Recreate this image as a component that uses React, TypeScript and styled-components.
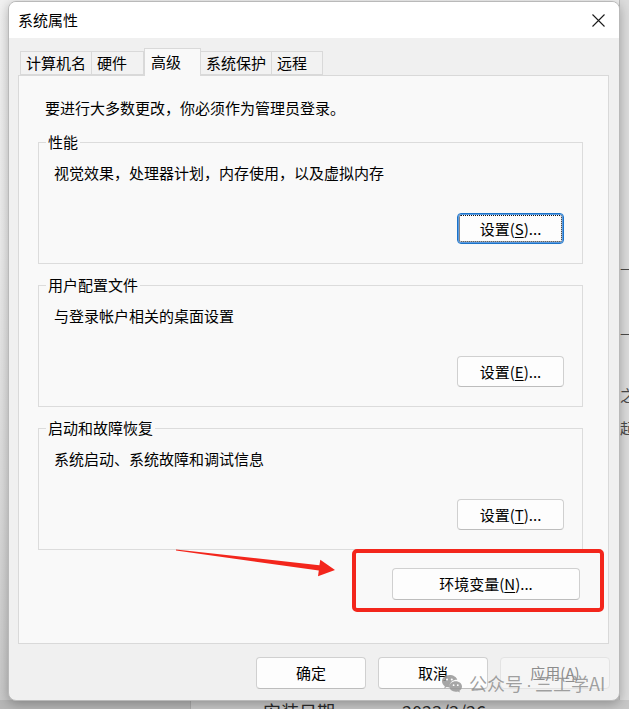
import React from "react";
import styled, { createGlobalStyle, css } from "styled-components";

const GlobalStyle = createGlobalStyle`
  html, body {
    margin: 0;
    padding: 0;
  }
  body {
    width: 629px;
    height: 709px;
    overflow: hidden;
    font-family: "Noto Sans CJK SC", "Microsoft YaHei", sans-serif;
    color: #000;
  }
`;

const Desktop = styled.div`
  position: relative;
  width: 629px;
  height: 709px;
  overflow: hidden;
`;

// the settings window lying behind the dialog
const BackWindow = styled.div`
  display: flex;
  flex-direction: column;
  width: 100%;
  height: 100%;
  background: linear-gradient(180deg, #f1f1f1 0%, #ececec 35%, #dcdcdc 70%, #c8c8c8 100%);
`;

const BackMain = styled.div`
  flex: 1;
  display: flex;
`;

const BackFill = styled.div`
  flex: 1;
`;

const BackSide = styled.div`
  width: 9px;
  display: flex;
  flex-direction: column;
  padding-top: 258px;
  font-size: 15px;
  line-height: 20px;
  color: #4a4a4a;
  overflow: hidden;
  white-space: nowrap;
  border-left: 1px solid #bdbdbd;
  background: #dcdcdc;
`;

const Fragment = styled.span<{ $gap: number }>`
  margin-top: ${p => p.$gap}px;
`;

const BackRow = styled.div`
  height: 9px;
  display: flex;
  font-size: 18px;
  line-height: 22px;
  color: #2a2a2a;
  white-space: nowrap;
`;

const BackCell = styled.div<{ $w?: number; $shade?: boolean }>`
  width: ${p => (p.$w ? `${p.$w}px` : "auto")};
  flex: ${p => (p.$w ? "none" : 1)};
  padding-left: ${p => (p.$shade ? 0 : 72)}px;
  background: ${p => (p.$shade ? "#b7b7b7" : "#c7c7c7")};
  border-right: ${p => (p.$shade ? "1px solid #a9a9a9" : "none")};
  display: flex;
  gap: 67px;
`;

const Dialog = styled.div`
  position: absolute;
  left: 8px;
  top: 1px;
  width: 612px;
  height: 700px;
  box-sizing: border-box;
  display: flex;
  flex-direction: column;
  background: #f0f0f0;
  border: 1px solid #b9b9b9;
  border-radius: 8px;
  box-shadow: 0 3px 12px rgba(0, 0, 0, 0.28);
  overflow: hidden;
`;

const TitleBar = styled.div`
  height: 36px;
  display: flex;
  align-items: center;
  justify-content: space-between;
  padding-left: 9px;
  background: #ffffff;
`;

const Title = styled.span`
  font-size: 15px;
  line-height: 20px;
`;

const CloseButton = styled.div`
  width: 42px;
  height: 36px;
  display: flex;
  align-items: center;
  justify-content: center;
`;

const Body = styled.div`
  flex: 1;
  display: flex;
  flex-direction: column;
  padding: 10px 10px 0 9px;
`;

const TabStrip = styled.div`
  height: 28px;
  display: flex;
  align-items: flex-end;
  padding-left: 2px;
`;

const Tab = styled.div<{ $w: number; $active?: boolean }>`
  position: relative;
  box-sizing: border-box;
  width: ${p => p.$w}px;
  display: flex;
  align-items: center;
  font-size: 15px;
  line-height: 20px;
  border: 1px solid #d9d9d9;
  border-left-width: 0;
  ${p =>
    p.$active
      ? css`
          height: 28px;
          padding-left: 6px;
          padding-bottom: 2px;
          background: #f9f9f9;
          border-left-width: 1px;
          border-bottom: none;
          z-index: 1;
        `
      : css`
          height: 24px;
          margin-bottom: 1px;
          padding-left: 5px;
          background: #f2f2f2;
          &:first-child {
            border-left-width: 1px;
          }
        `}
`;

const Panel = styled.div`
  box-sizing: border-box;
  height: 569px;
  margin-top: -1px;
  padding: 22px 25px 0 19px;
  display: flex;
  flex-direction: column;
  background: #f9f9f9;
  border: 1px solid #d9d9d9;
`;

const Notice = styled.div`
  margin-left: 7px;
  font-size: 15px;
  line-height: 20px;
`;

const Group = styled.fieldset`
  margin: 11px 0 0;
  padding: 0 18px 19px 15px;
  min-width: 0;
  display: flex;
  flex-direction: column;
  border: 1px solid #dcdcdc;

  &:first-of-type {
    margin-top: 14px;
  }
`;

const Legend = styled.legend`
  margin-left: -8px;
  padding: 0 2px;
  font-size: 15px;
  line-height: 20px;
`;

const GroupText = styled.div`
  margin-top: 11px;
  font-size: 15px;
  line-height: 20px;
`;

const Button = styled.div<{ $w: number; $h?: number; $focused?: boolean; $disabled?: boolean }>`
  box-sizing: border-box;
  width: ${p => p.$w}px;
  height: ${p => p.$h ?? 31}px;
  display: flex;
  align-items: center;
  justify-content: center;
  font-size: 15px;
  line-height: 20px;
  background: #fdfdfd;
  border: 1px solid #d0d0d0;
  border-bottom-color: #bdbdbd;
  border-radius: 4px;

  u {
    text-underline-offset: 2px;
  }

  ${p =>
    p.$focused &&
    css`
      border: 1px solid #1a73c9;
      box-shadow: inset 0 0 0 1px #5d9be0;
      outline: 1px dotted #111;
      outline-offset: -3px;
    `}

  ${p =>
    p.$disabled &&
    css`
      background: #f5f5f5;
      border-color: #e3e3e3;
      color: #8c8c8c;
    `}
`;

const SettingsButton = styled(Button)`
  align-self: flex-end;
  margin-top: 30px;
`;

const EnvRow = styled.div`
  margin-top: 18px;
  padding-right: 3px;
  display: flex;
  justify-content: flex-end;
`;

const FooterRow = styled.div`
  margin-top: 13px;
  margin-right: -1px;
  display: flex;
  justify-content: flex-end;
  gap: 12px;
`;

// annotations drawn over the screenshot
const Markup = styled.svg`
  position: absolute;
  left: 0;
  top: 0;
  pointer-events: none;
`;

const Watermark = styled.div`
  position: absolute;
  left: 441px;
  top: 672px;
  display: flex;
  align-items: center;
  gap: 6px;
  font-size: 18px;
  line-height: 22px;
  color: rgba(140, 140, 140, 0.82);
  white-space: nowrap;
  pointer-events: none;
`;

const Dot = styled.span`
  font-family: "Liberation Sans", Arial, sans-serif;
  padding: 0 3px;
`;

const CloseIcon = () => (
  <svg width="13" height="13" viewBox="0 0 13 13">
    <path d="M0.5 0.5L12.5 12.5M12.5 0.5L0.5 12.5" stroke="#1b1b1b" strokeWidth="1.1" />
  </svg>
);

const WeChatIcon = () => (
  <svg width="22" height="20" viewBox="0 0 22 20">
    <path
      d="M8.5 1C4.4 1 1 3.8 1 7.3c0 2 1.1 3.7 2.8 4.9L3.2 14.4l2.5-1.3c.9.3 1.8.4 2.8.4h.4a5.8 5.8 0 0 1-.2-1.6c0-3.4 3.2-6.1 7.2-6.1h.4C15.6 3.1 12.4 1 8.5 1z"
      fill="rgba(150,150,150,0.85)"
    />
    <path
      d="M21 12.5c0-2.9-2.8-5.2-6.3-5.2s-6.3 2.3-6.3 5.2 2.8 5.2 6.3 5.2c.8 0 1.5-.1 2.2-.3l2 1.1-.5-1.7c1.6-1 2.6-2.5 2.6-4.3z"
      fill="rgba(150,150,150,0.85)"
    />
    <circle cx="6" cy="5.6" r="1" fill="#fff" />
    <circle cx="10.8" cy="5.6" r="1" fill="#fff" />
    <circle cx="12.6" cy="11.2" r="0.9" fill="#fff" />
    <circle cx="16.8" cy="11.2" r="0.9" fill="#fff" />
  </svg>
);

const settingsGroups = [
  { title: "性能", text: "视觉效果，处理器计划，内存使用，以及虚拟内存", key: "S", focused: true },
  { title: "用户配置文件", text: "与登录帐户相关的桌面设置", key: "E" },
  { title: "启动和故障恢复", text: "系统启动、系统故障和调试信息", key: "T" },
];

const tabs = [
  { label: "计算机名", w: 72 },
  { label: "硬件", w: 52 },
  { label: "高级", w: 57, active: true },
  { label: "系统保护", w: 71 },
  { label: "远程", w: 51 },
];

const fragments = [
  { text: "—", gap: 0 },
  { text: "—(", gap: 45 },
  { text: "之", gap: 42 },
  { text: "起", gap: 13 },
];

export default function App() {
  return (
    <Desktop>
      <GlobalStyle />
      <BackWindow>
        <BackMain>
          <BackFill />
          <BackSide>
            {fragments.map(f => (
              <Fragment key={f.text} $gap={f.gap}>
                {f.text}
              </Fragment>
            ))}
          </BackSide>
        </BackMain>
        <BackRow>
          <BackCell $w={190} $shade />
          <BackCell>
            <span>安装日期</span>
            <span>2023/3/26</span>
          </BackCell>
        </BackRow>
      </BackWindow>

      <Dialog>
        <TitleBar>
          <Title>系统属性</Title>
          <CloseButton>
            <CloseIcon />
          </CloseButton>
        </TitleBar>
        <Body>
          <TabStrip>
            {tabs.map(t => (
              <Tab key={t.label} $w={t.w} $active={t.active}>
                {t.label}
              </Tab>
            ))}
          </TabStrip>
          <Panel>
            <Notice>要进行大多数更改，你必须作为管理员登录。</Notice>
            {settingsGroups.map(g => (
              <Group key={g.title}>
                <Legend>{g.title}</Legend>
                <GroupText>{g.text}</GroupText>
                <SettingsButton $w={107} $focused={g.focused}>
                  设置(<u>{g.key}</u>)...
                </SettingsButton>
              </Group>
            ))}
            <EnvRow>
              <Button $w={188} $h={32}>
                环境变量(<u>N</u>)...
              </Button>
            </EnvRow>
          </Panel>
          <FooterRow>
            <Button $w={110} $h={32}>确定</Button>
            <Button $w={110} $h={32}>取消</Button>
            <Button $w={110} $h={32} $disabled>
              应用(<u>A</u>)
            </Button>
          </FooterRow>
        </Body>
      </Dialog>

      <Markup width="629" height="709" viewBox="0 0 629 709">
        <rect x="354" y="551" width="248" height="59" rx="3" fill="none" stroke="#f3261c" strokeWidth="4" />
        <polygon
          points="176,549.4 319.4,565.3 320.3,559.8 335,570 318,576.2 318.8,570.6 176,550.6"
          fill="#f3261c"
        />
      </Markup>

      <Watermark>
        <WeChatIcon />
        <span>
          公众号<Dot>·</Dot>三工学AI
        </span>
      </Watermark>
    </Desktop>
  );
}
